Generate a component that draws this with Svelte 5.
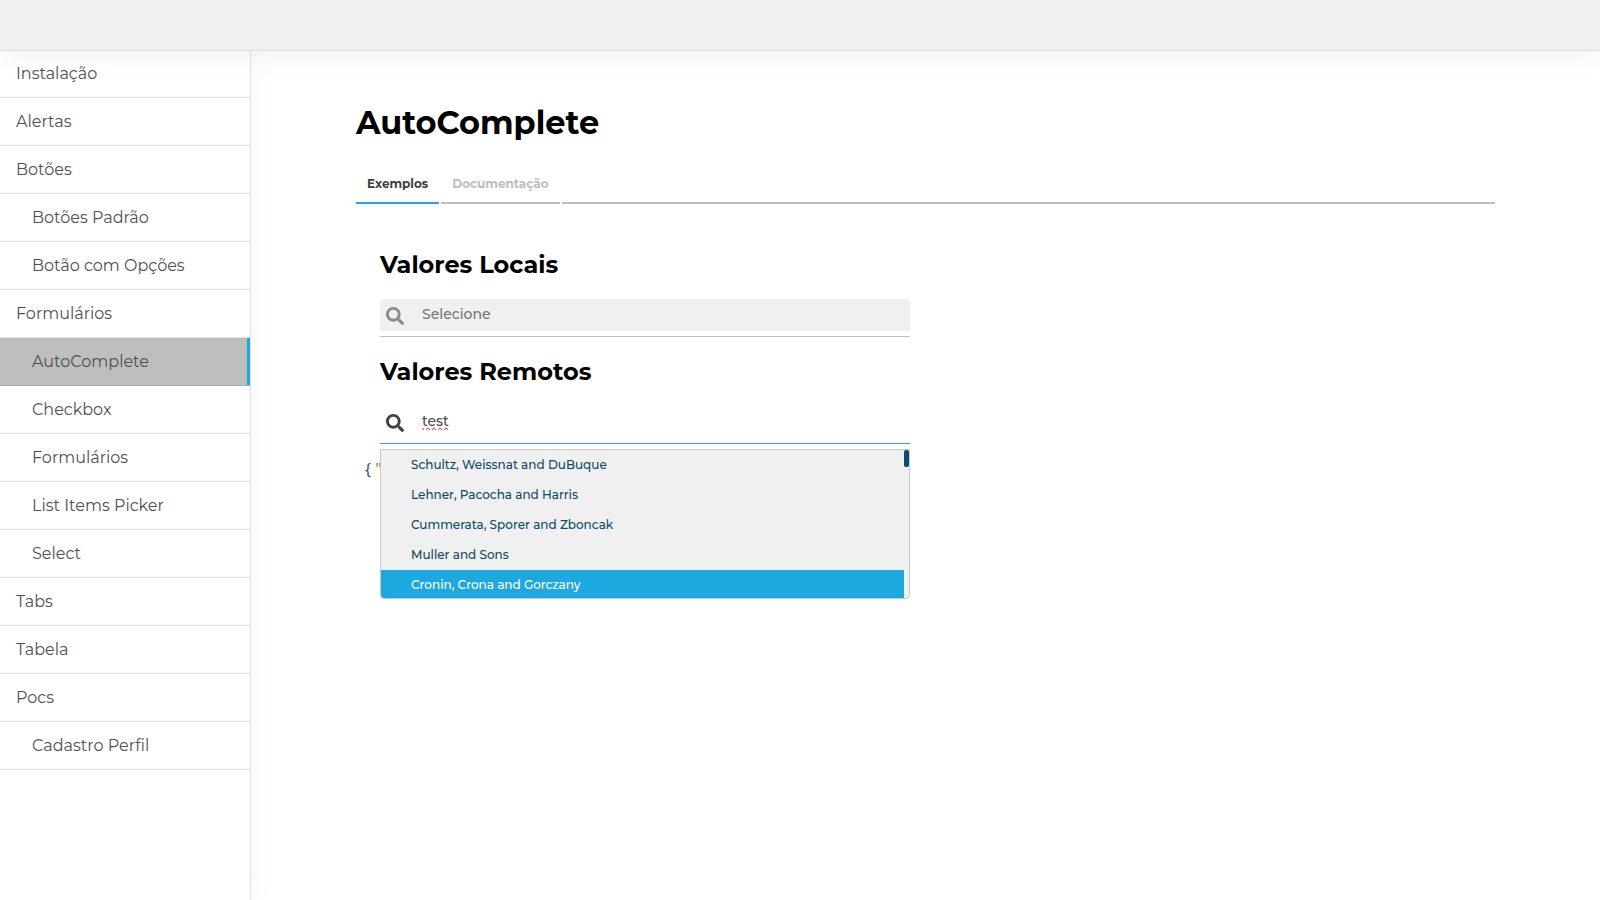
<script>
  const menu = [
    { label: 'Instalação' },
    { label: 'Alertas' },
    { label: 'Botões' },
    { label: 'Botões Padrão', sub: true },
    { label: 'Botão com Opções', sub: true },
    { label: 'Formulários' },
    { label: 'AutoComplete', sub: true, active: true },
    { label: 'Checkbox', sub: true },
    { label: 'Formulários', sub: true },
    { label: 'List Items Picker', sub: true },
    { label: 'Select', sub: true },
    { label: 'Tabs' },
    { label: 'Tabela' },
    { label: 'Pocs' },
    { label: 'Cadastro Perfil', sub: true }
  ];
  const companies = [
    'Schultz, Weissnat and DuBuque',
    'Lehner, Pacocha and Harris',
    'Cummerata, Sporer and Zboncak',
    'Muller and Sons',
    'Cronin, Crona and Gorczany'
  ];
  let selected = $state(4);
  let tab = $state('Exemplos');
  let local = $state('');
  let remote = $state('test');
</script>

{#snippet searchIcon()}
  <svg class="icon" viewBox="0 0 512 512" aria-hidden="true">
    <path d="M505 442.700L405.300 343c-4.500-4.500-10.600-7-17-7H372c27.600-35.300 44-79.700 44-128C416 93.100 322.900 0 208 0S0 93.100 0 208s93.100 208 208 208c48.300 0 92.700-16.400 128-44v16.300c0 6.400 2.500 12.500 7 17l99.700 99.700c9.400 9.400 24.600 9.400 33.900 0l28.300-28.300c9.400-9.400 9.400-24.600.1-34zM208 336c-70.700 0-128-57.200-128-128 0-70.700 57.200-128 128-128 70.700 0 128 57.200 128 128 0 70.700-57.200 128-128 128z" />
  </svg>
{/snippet}

<div class="page">
  <header></header>
  <div class="body">
    <nav>
      {#each menu as item}
        <a href="#top" class:sub={item.sub} class:active={item.active}>{item.label}</a>
      {/each}
    </nav>
    <main>
      <h1>AutoComplete</h1>
      <div class="tabs">
        {#each ['Exemplos', 'Documentação'] as name}
          <button class:current={tab === name} onclick={() => (tab = name)}>{name}</button>
        {/each}
        <span class="rest"></span>
      </div>
      <div class="panel">
        <section>
          <h2><label for="local">Valores Locais</label></h2>
          <div class="field">
            <div class="control filled">
              {@render searchIcon()}
              <input id="local" placeholder="Selecione" bind:value={local} />
            </div>
          </div>
          <h2><label for="remote">Valores Remotos</label></h2>
          <div class="field open">
            <div class="control">
              {@render searchIcon()}
              <input id="remote" class="misspelt" spellcheck="false" bind:value={remote} />
            </div>
            <div class="options">
              <ul>
                {#each companies as name, i}
                  <li><button class:chosen={selected === i} onclick={() => (selected = i)}>{name}</button></li>
                {/each}
              </ul>
              <span class="thumb"></span>
            </div>
          </div>
          <pre>{'{'} <span>"</span></pre>
        </section>
      </div>
    </main>
  </div>
</div>

<style>
  :global(body) {
    margin: 0;
    background: #fff;
  }
  .page {
    min-height: 100vh;
    display: flex;
    flex-direction: column;
    font-family: Montserrat, Inter, sans-serif;
    color: #404040;
  }
  .page * {
    box-sizing: border-box;
  }
  header {
    position: relative;
    z-index: 1;
    height: 51px;
    margin-bottom: -1px;
    background: #f0f0f0;
    border-bottom: 1px solid #dedede;
    box-shadow: 0 0 30px rgba(0, 0, 0, 0.08);
  }
  .body {
    flex: 1;
    display: flex;
  }
  nav {
    flex: none;
    width: 251px;
    border-right: 1px solid #e0e0e0;
    box-shadow: 0 0 30px rgba(0, 0, 0, 0.04);
  }
  nav a {
    display: block;
    height: 48px;
    padding-left: 16px;
    border-bottom: 1px solid #e0e0e0;
    background: #fff;
    font-size: 16px;
    font-weight: 400;
    line-height: 47px;
    color: #505050;
    text-decoration: none;
  }
  nav a.sub {
    padding-left: 32px;
  }
  nav a.active {
    background: #bebebe;
    border-bottom-color: #a9a9a9;
    box-shadow: inset -3px 0 #1ea8e0;
  }
  main {
    flex: 1;
    min-width: 0;
    padding: 49px 105px;
  }
  h1 {
    margin: 0;
    font-size: 32px;
    font-weight: 700;
    line-height: 48px;
    color: #000;
  }
  .tabs {
    display: flex;
    gap: 2px;
    margin-top: 21px;
  }
  .tabs button {
    height: 36px;
    padding: 0 11px 2px;
    border: 0;
    border-bottom: 2px solid #bebebe;
    background: none;
    font: 700 12px/30px Montserrat, Inter, sans-serif;
    color: #bebebe;
  }
  .tabs button.current {
    border-color: #1ea8e0;
    color: #404040;
  }
  .rest {
    flex: 1;
    border-bottom: 2px solid #bebebe;
  }
  .panel {
    display: grid;
    grid-template-columns: 1fr 1fr;
    gap: 31px;
    padding: 43px 24px;
  }
  h2 {
    margin: 0;
    font-size: 24px;
    font-weight: 700;
    line-height: 36px;
    color: #000;
  }
  .field {
    position: relative;
    margin: 16px 0 17px;
    padding-bottom: 5px;
    border-bottom: 1px solid #bebebe;
  }
  .field.open {
    border-color: #1ea8e0;
  }
  .control {
    display: flex;
    align-items: center;
    height: 32px;
    padding-left: 6px;
    border-radius: 4px 4px 0 0;
    color: #404040;
  }
  .control.filled {
    background: #f0f0f0;
  }
  .icon {
    flex: none;
    width: 18px;
    height: 18px;
    margin-top: 2px;
    fill: #404040;
  }
  .filled .icon {
    fill: #8a8a8a;
  }
  input {
    flex: 1;
    min-width: 0;
    height: 32px;
    padding: 0 0 2px 18px;
    border: 0;
    outline: 0;
    background: none;
    font: 500 14px/20px Montserrat, Inter, sans-serif;
    color: #505050;
  }
  input::placeholder {
    color: #757575;
    opacity: 1;
  }
  .misspelt {
    text-decoration: spelling-error;
  }
  .options {
    position: absolute;
    z-index: 2;
    top: 43px;
    left: 0;
    right: 0;
    height: 150px;
    overflow: hidden;
    border: 1px solid #c8c8c8;
    border-radius: 0 0 4px 4px;
    background: #f0f0f0;
  }
  ul {
    margin: 0 5px 0 0;
    padding: 0;
    list-style: none;
  }
  li button {
    display: block;
    width: 100%;
    height: 30px;
    padding: 0 30px;
    border: 0;
    background: none;
    text-align: left;
    font: 500 12px/30px Montserrat, Inter, sans-serif;
    color: #0d4a66;
  }
  li button.chosen {
    background: #1ea8e0;
    color: #fff;
  }
  .thumb {
    position: absolute;
    top: 0;
    right: 0;
    width: 5px;
    height: 17px;
    border-radius: 2px;
    background: #0d4a66;
  }
  pre {
    margin: 0 0 0 -15px;
    font: 400 16px/16px "Open Sans", sans-serif;
    color: #404040;
  }
  pre span {
    color: #a67f00;
  }
</style>
